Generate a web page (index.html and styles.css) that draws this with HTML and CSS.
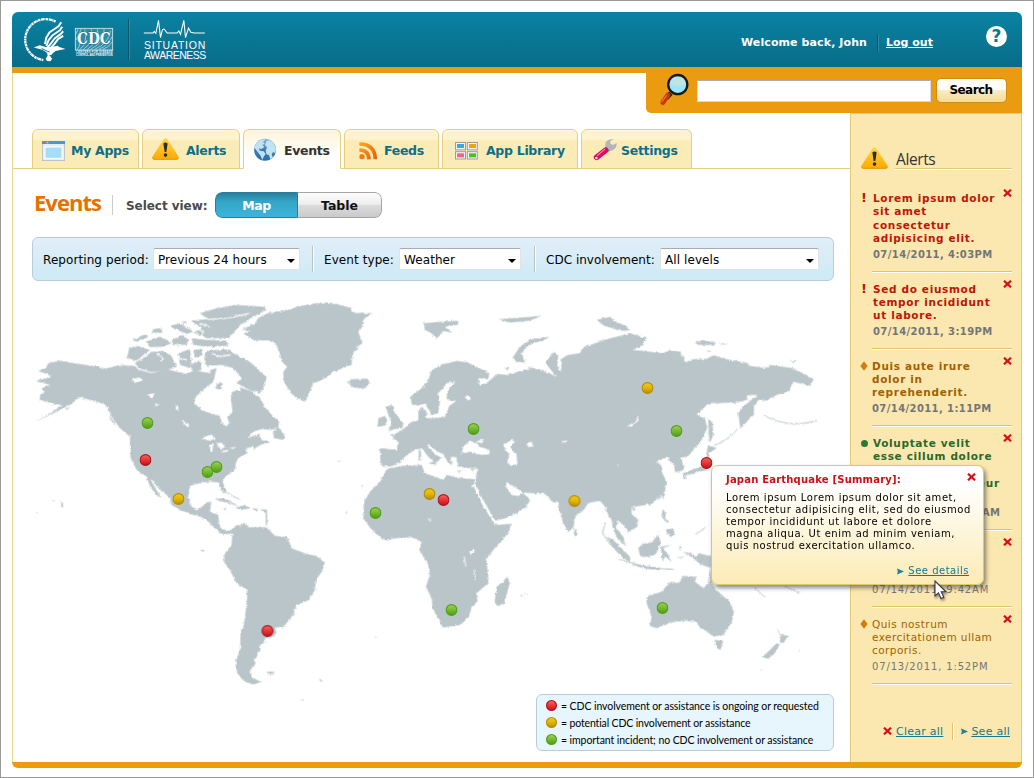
FILE: index.html
```html
<!DOCTYPE html>
<html lang="en">
<head>
<meta charset="utf-8">
<title>Situation Awareness - Events</title>
<link rel="stylesheet" href="styles.css">
</head>
<body>
<svg class="defs" width="0" height="0">
  <defs>
    <linearGradient id="gRed" x1="0" y1="0" x2="0" y2="1"><stop offset="0" stop-color="#f06a62"/><stop offset=".45" stop-color="#e8393c"/><stop offset="1" stop-color="#c80f14"/></linearGradient>
    <linearGradient id="gYellow" x1="0" y1="0" x2="0" y2="1"><stop offset="0" stop-color="#f0cf10"/><stop offset=".5" stop-color="#dfb70a"/><stop offset="1" stop-color="#b88a04"/></linearGradient>
    <linearGradient id="gGreen" x1="0" y1="0" x2="0" y2="1"><stop offset="0" stop-color="#a2d05a"/><stop offset=".5" stop-color="#76b832"/><stop offset="1" stop-color="#4c9c10"/></linearGradient>
    <linearGradient id="gWarn" x1="0" y1="0" x2="0" y2="1"><stop offset="0" stop-color="#ffd84a"/><stop offset="1" stop-color="#ffa800"/></linearGradient>
    <linearGradient id="gFeed" x1="0" y1="0" x2="1" y2="1"><stop offset="0" stop-color="#ffa41c"/><stop offset="1" stop-color="#e2620c"/></linearGradient>
    <linearGradient id="gGlobe" x1="0" y1="0" x2="0" y2="1"><stop offset="0" stop-color="#8fb4d2"/><stop offset=".5" stop-color="#3e7cb0"/><stop offset="1" stop-color="#2a6fae"/></linearGradient>
    <symbol id="dotRed" viewBox="0 0 12 12"><circle cx="6" cy="6" r="5.4" fill="url(#gRed)" stroke="#a81820" stroke-width="1.2"/></symbol>
    <symbol id="dotYellow" viewBox="0 0 12 12"><circle cx="6" cy="6" r="5.4" fill="url(#gYellow)" stroke="#b98a08" stroke-width="1.2"/></symbol>
    <symbol id="dotGreen" viewBox="0 0 12 12"><circle cx="6" cy="6" r="5.4" fill="url(#gGreen)" stroke="#4fa01a" stroke-width="1.2"/></symbol>
    <symbol id="warn" viewBox="0 0 81 70">
      <path d="M34 8Q40 -2 47 8L79 58Q84 69 73 69H8Q-3 69 2 58Z" fill="url(#gWarn)"/>
      <path d="M2 58Q-3 69 8 69H73Q84 69 79 58Q82 66 73 66H8Q0 66 2 58Z" fill="#e79a00"/>
      <path d="M34 20Q40 14 47 20L43 46H38Z" fill="#2b2b2b"/><circle cx="40.500" cy="55" r="5.500" fill="#2b2b2b"/>
    </symbol>
    <symbol id="cross" viewBox="0 0 9 8"><path d="M1 .7L8 7.300M8 .7L1 7.300" stroke="#d80f18" stroke-width="2.200" fill="none"/></symbol>
    <symbol id="arrow" viewBox="0 0 7 7"><path d="M0 .5L7 3.500L0 6.500L.8 3.500Z" fill="#1b7f9e"/></symbol>
  </defs>
</svg>

<div class="page">
  <header class="header">
    <svg class="hhs" viewBox="66 50 138 136">
      <path d="M170 64A62 62 0 1 0 133 180" fill="none" stroke="#fff" stroke-width="7" stroke-dasharray="7 1.500 3 1 9 2"/>
      <g fill="none" stroke="#fff" stroke-width="6" stroke-linejoin="round">
        <path d="M187 66L179 78L152 96L142 112L138 132"/>
        <path d="M190 80L183 90L160 106L149 120L142 138"/>
        <path d="M193 93L186 101L167 115L156 130L146 142"/>
        <path d="M193 107L178 116L166 132L154 146L138 150"/>
      </g>
      <path d="M104 142L122 135L140 141L160 140L176 137L181 141L200 147L184 150L170 153L160 161L154 170L160 176L154 184L144 183L140 176L146 166L144 158L130 149Z" fill="#fff"/>
      <path d="M128 145L142 152L152 156M152 166L168 168" stroke="#0a7795" stroke-width="3" fill="none"/>
    </svg>
    <svg class="cdc" viewBox="222 81 120 90">
      <rect x="226" y="85" width="112" height="65" fill="#2f8ba6" stroke="#d6eaf0" stroke-width="2.500"/>
      <g stroke="#cfe6ed" stroke-width="2" fill="none">
        <path d="M232 148Q244 136 236 108M240 148Q264 130 254 88M250 148Q286 124 274 88M262 148Q302 122 292 88M272 148Q318 124 312 88M284 148Q326 130 332 92M296 148Q326 136 336 110M308 148Q328 142 336 126M228 120L244 87M228 102L234 88"/>
      </g>
      <text x="231" y="132" class="cdc-name" textLength="101" lengthAdjust="spacingAndGlyphs">CDC</text>
      <text x="228" y="160" class="cdc-sub" textLength="110">CENTERS FOR DISEASE</text>
      <text x="228" y="168" class="cdc-sub" textLength="110" lengthAdjust="spacingAndGlyphs">CONTROL AND PREVENTION</text>
    </svg>
    <div class="brand">
      <svg viewBox="430 58 188 60"><path d="M432 100H460L463 95L468 101L476 62L482 114L488 89L493 88L502 100H532L537 94L542 104L552 62L557 114L566 85L573 98L583 100H615" fill="none" stroke="#fff" stroke-width="3.200"/></svg>
      <span class="b1">SITUATION</span>
      <span class="b2">AWARENESS</span>
    </div>
    <div class="user"><span class="welcome">Welcome back, John</span><a class="logout" href="#">Log out</a><span class="help">?</span></div>
  </header>

  <form class="search">
    <svg class="lens" viewBox="0 0 88 98">
      <path d="M33 60L18 76" stroke="#222" stroke-width="15"/>
      <path d="M24 66L9 88" stroke="#c43a06" stroke-width="15" stroke-linecap="round"/>
      <path d="M19 68L6 86" stroke="#f2722e" stroke-width="4" stroke-linecap="round"/>
      <circle cx="54" cy="34" r="29" fill="#9ce6fb" stroke="#14181b" stroke-width="7"/>
      <path d="M30 30A25 25 0 0 1 78 30Q54 48 30 30Z" fill="#c3e2e4"/>
    </svg>
    <span class="field"></span>
    <button class="go" type="button">Search</button>
  </form>

  <div class="columns">
    <main class="main">
      <nav class="tabs">
        <a class="tab t1"><svg width="23" height="20" viewBox="0 0 69 60"><rect x="1" y="1" width="67" height="58" fill="#e9edf0" stroke="#b4bcc4" stroke-width="3"/><rect width="69" height="9" fill="#3d9be0"/><rect x="3" y="3" width="5" height="4" fill="#e55"/><rect x="14" y="3" width="5" height="4" fill="#fc4"/><rect x="9" y="18" width="51" height="34" fill="#a5dcf7" stroke="#fff" stroke-width="3"/></svg><span>My Apps</span></a>
        <a class="tab t2"><svg width="27" height="23"><use href="#warn"/></svg><span>Alerts</span></a>
        <a class="tab t3 on"><svg width="24" height="23" viewBox="0 0 72 69"><circle cx="36" cy="35" r="33" fill="url(#gGlobe)"/><path d="M3 30Q8 12 24 5L38 4L30 12L36 18L28 20L34 27L24 34L18 30L20 38L32 40L38 48L32 56L28 66L22 52L14 42L8 34ZM40 10L46 6L56 10Q66 18 69 32L67 46L60 42L56 50L60 58L52 64L48 52L40 48L38 38L42 28L36 22Z" fill="#bfe3f3"/></svg><span>Events</span></a>
        <a class="tab t4"><svg width="19" height="18" viewBox="0 0 57 54"><circle cx="9" cy="44" r="8" fill="#f47a10"/><path d="M1 24Q29 24 30 52M1 6Q48 6 49 52" fill="none" stroke="url(#gFeed)" stroke-width="11"/></svg><span>Feeds</span></a>
        <a class="tab t5"><svg width="23" height="18" viewBox="0 0 69 54"><g stroke="#999da3" stroke-width="3" fill="#f4f4f4"><rect x="1.500" y="1.500" width="30" height="22"/><rect x="37" y="1.500" width="30" height="22"/><rect x="1.500" y="29" width="30" height="22"/><rect x="37" y="29" width="30" height="22"/></g><rect x="6" y="6" width="21" height="12" fill="#35a9e8"/><rect x="42" y="6" width="21" height="12" fill="#eda021"/><rect x="6" y="34" width="21" height="12" fill="#ef6387"/><rect x="42" y="34" width="21" height="12" fill="#46c40e"/></svg><span>App Library</span></a>
        <a class="tab t6"><svg width="24" height="22" viewBox="0 0 72 66"><path d="M36 28L45 38L60 33Q72 26 71 12L60 18L52 14L52 6L62 1Q46 -2 38 10Z" fill="#b2b6ba"/><path d="M38 26L48 36" stroke="#8e9396" stroke-width="5"/><path d="M38 34L11 55" stroke="#dc0c60" stroke-width="17" stroke-linecap="round"/><path d="M36 30L12 50" stroke="#f77aa8" stroke-width="4"/><circle cx="10" cy="57" r="4" fill="#fbdbe6"/></svg><span>Settings</span></a>
      </nav>

      <div class="bar">
        <h1>Events</h1>
        <span class="view-label">Select view:</span>
        <div class="switch"><span class="map-on">Map</span><span class="table-off">Table</span></div>
      </div>

      <div class="filters">
        <label class="f1">Reporting period:</label><span class="select s1">Previous 24 hours</span>
        <label class="f2">Event type:</label><span class="select s2">Weather</span>
        <label class="f3">CDC involvement:</label><span class="select s3">All levels</span>
      </div>

      <section class="map">
        <svg class="world" viewBox="13 281 837 481">
          <defs><filter id="coast" x="0" y="0" width="1" height="1"><feTurbulence type="fractalNoise" baseFrequency=".3" numOctaves="3" seed="4"/><feDisplacementMap in="SourceGraphic" scale="3" xChannelSelector="R" yChannelSelector="G"/></filter></defs>
          <g filter="url(#coast)" fill="#bac5c9" transform="translate(-.6 -.6)">
            <!-- North America -->
            <g transform="translate(20.500 290.500) scale(.33333)">
              <path d="M45 273L80 265L95 258L55 243L78 235L85 220L120 212L160 220L235 230L250 238L300 225L345 228L350 238L395 250L440 238L470 245L500 252L525 240L545 245L572 250L585 262L578 278L560 290L527 320L523 340L545 360L575 372L600 378L605 395L618 410L628 400L622 382L638 365L635 345L632 325L636 306L655 300L685 312L718 320L735 350L755 375L778 395L775 412L755 420L725 418L700 425L682 445L700 438L718 432L722 446L740 452L750 458L720 465L702 478L700 470L680 475L682 490L655 505L648 520L645 540L615 562L608 575L618 600L612 612L602 598L597 578L575 575L545 578L510 588L505 620L515 650L530 658L550 650L555 638L575 635L570 665L595 675L598 700L605 718L630 722L645 712L648 722L630 732L605 732L585 715L560 690L540 680L510 672L480 660L455 645L450 625L430 605L410 590L400 570L394 568L398 580L410 600L425 625L410 615L390 590L380 560L350 540L332 505L330 440L300 415L275 380L262 348L240 338L210 330L180 322L150 345L100 370L45 395L100 365L125 345L100 342L60 330L60 315L75 305L65 295L90 285Z"/>
              <path d="M760 425L775 410L785 425L795 440L790 450L762 445Z"/>
              <path d="M328 172L360 170L390 180L350 212L320 205L325 190Z"/>
              <path d="M365 208L395 186L430 183L455 198L470 232L440 240L395 247L355 235L345 220Z"/>
              <path d="M337 150L380 132L385 142L350 155ZM400 118L425 114L428 128L395 130ZM378 155L420 140L440 150L455 160L430 170L390 172ZM450 108L480 100L520 125L500 132L465 118ZM455 150L490 135L505 150L500 165L460 165ZM515 145L560 150L620 152L625 168L560 170L520 165ZM485 97L500 94L498 104Z"/>
              <path d="M475 190L510 178L515 210L510 235L480 225ZM520 180L545 178L548 195L525 205ZM510 225L540 210L545 240L520 245Z"/>
              <path d="M560 182L620 178L650 195L690 215L740 262L735 285L720 310L690 300L650 280L665 265L640 235L605 225L560 228L552 200Z"/>
              <path d="M570 240L590 235L585 258L575 262ZM590 280L605 278L605 300L588 296ZM660 292L700 305L715 330L700 346L690 325L665 308Z"/>
              <path d="M540 70L590 55L650 45L730 50L740 60L700 80L680 95L660 105L640 130L625 145L560 145L520 128L545 115L512 92L560 88Z"/>
              <path d="M585 628L610 625L640 640L660 652L630 640L600 634ZM645 655L675 645L692 655L665 660ZM700 656L715 657L714 662L700 661ZM608 655L622 657L612 661ZM720 656L738 660L742 668L742 705L738 706L737 668Z"/>
              <path d="M120 633L132 648L125 653ZM98 630L104 633L99 635ZM48 667L54 669L50 672ZM268 380L275 385L290 405L280 402ZM135 360L148 350L145 358Z"/>
              <g fill="#fff"><path d="M545 447L560 438L575 434L588 447L565 452ZM570 462L580 460L577 490L571 482ZM590 460L605 458L615 470L602 480ZM600 488L625 478L623 485ZM628 475L648 470L640 477ZM335 270L355 262L370 270L345 280ZM382 315L405 310L396 325ZM485 390L508 405L505 413L490 400ZM405 345L420 340L410 350ZM468 345L476 350L474 365L468 358ZM615 240L636 236L640 262L620 275L608 262Z"/></g>
              <g stroke="#fff" stroke-width="4" fill="none"><path d="M540 75L565 88L620 85L690 70M470 205L500 210M575 190L600 200L630 195M540 100L570 112M410 190L430 205L425 215M530 115L550 125L545 140L500 142"/></g>
            </g>
            <!-- Greenland, Iceland, South America -->
            <g transform="translate(200.500 290.500) scale(.33333)">
              <path d="M125 120L165 100L175 85L200 70L270 60L290 50L350 40L410 42L455 55L455 68L517 70L490 90L485 115L475 125L488 160L465 175L480 170L458 188L455 225L400 245L385 258L365 270L340 280L318 333L290 325L270 305L252 275L250 245L262 230L245 215L240 190L228 165L215 152L160 150L132 132L150 122Z"/>
              <path d="M442 278L455 268L500 266L512 280L490 297L460 292Z"/>
              <path d="M95 720L110 708L135 702L150 712L200 712L225 738L262 742L275 775L320 792L350 798L374 818L370 840L348 870L345 900L328 930L290 945L280 975L250 1012L225 1012L230 1030L215 1042L195 1045L195 1060L180 1062L182 1078L172 1090L172 1105L160 1108L168 1120L152 1140L155 1160L175 1172L187 1175L160 1184L130 1172L112 1150L107 1115L120 1080L122 1030L133 1000L140 940L143 900L110 880L90 840L72 815L75 790L95 765L97 735Z"/>
              <path d="M200 1145L224 1146L218 1154L205 1153ZM355 1166L368 1172L364 1176ZM300 1230L315 1230L312 1234ZM413 512L424 514L418 517ZM483 588L490 586L488 592ZM436 668L442 666L440 672ZM4 778L14 782L8 787Z"/>
            </g>
            <!-- Europe, Asia, Africa, Oceania -->
            <g transform="translate(350.500 300.500) scale(.33333)">
              <path d="M90 450L95 445L140 450L145 425L120 405L140 400L165 385L185 365L205 362L205 332L218 322L232 340L228 355L262 354L285 350L298 318L320 302L270 305L265 340L245 345L225 310L205 318L185 310L182 290L215 265L235 240L245 212L270 195L320 183L350 187L380 200L418 220L415 238L385 235L390 255L410 250L440 222L475 225L520 210L545 203L600 220L620 232L587 190L610 155L625 165L622 200L634 215L635 175L655 165L690 160L700 142L730 132L770 118L800 110L840 100L890 115L880 135L850 150L940 160L960 150L990 155L1008 187L1030 178L1070 177L1090 166L1140 180L1190 188L1200 198L1250 205L1260 195L1330 205L1392 238L1380 258L1330 245L1315 275L1280 285L1250 302L1225 300L1212 320L1212 345L1190 365L1171 385L1165 340L1180 320L1222 285L1195 285L1190 300L1160 308L1080 310L1060 325L1040 345L1065 355L1072 385L1055 420L1035 445L1015 468L990 475L1004 498L998 512L975 517L972 495L960 485L955 470L920 485L938 500L935 515L950 545L945 575L905 612L870 618L845 622L845 640L865 660L862 680L835 697L825 680L805 660L798 680L820 710L827 738L805 720L790 690L785 660L775 645L765 620L750 602L715 610L700 632L675 650L672 680L655 697L640 670L628 630L625 605L612 610L585 582L520 578L470 546L468 560L485 585L505 588L520 580L542 600L525 625L480 650L435 667L420 635L385 575L375 560L380 538L383 505L350 503L325 500L320 472L300 470L310 495L295 490L280 462L262 455L235 432L232 440L260 465L275 475L262 485L255 490L235 470L215 445L195 450L175 462L155 480L150 490L120 500L92 495Z"/>
              <path d="M110 507L150 498L215 495L225 520L255 530L280 540L290 525L330 535L375 538L372 560L395 610L435 675L485 672L475 700L430 750L408 780L415 820L415 850L380 880L383 905L365 920L358 950L330 975L278 983L265 955L248 925L245 895L228 860L240 825L235 795L208 750L215 725L180 710L100 720L65 690L40 655L42 605L60 575L90 545Z"/>
              <path d="M472 828L480 850L462 912L445 918L434 905L440 860L462 845Z"/>
              <path d="M108 320L130 315L135 340L160 370L158 385L115 390L125 370L115 345ZM85 355L105 348L112 360L105 378L83 380ZM207 448L213 455L213 482L206 480ZM235 488L258 485L255 497ZM318 512L334 512L330 517ZM358 508L374 504L368 512Z"/>
              <path d="M220 70L270 66L325 62L325 74L285 80L308 100L280 92L262 115L225 88ZM445 58L500 54L575 48L540 62L480 68ZM487 175L510 140L545 118L600 110L580 122L540 132L515 160L525 188L500 186ZM464 205L478 204L474 212Z"/>
              <path d="M672 685L684 695L680 710L672 705ZM740 60L780 50L800 68L830 78L838 92L810 92L765 78ZM1035 128L1060 120L1095 128L1090 136L1045 135ZM1105 130L1135 132L1120 136ZM1065 152L1085 152L1080 156ZM1318 184L1340 180L1335 186Z"/>
              <path d="M1075 355L1088 370L1090 405L1080 430L1076 400ZM1070 455L1075 435L1100 445L1085 455L1078 460L1078 475L1070 478ZM1072 478L1078 495L1070 510L1040 516L1000 530L1000 520L1030 508L1055 500ZM1000 522L1010 535L1002 538Z"/>
              <path d="M935 580L945 582L940 600ZM938 628L948 640L945 655L960 665L950 668L935 650ZM950 690L970 685L975 705L960 712ZM865 745L880 730L905 728L925 705L932 725L920 760L900 772L870 768ZM770 710L790 720L840 770L843 788L820 775L790 745ZM840 792L900 798L935 805L930 812L880 805ZM932 740L965 735L940 745L955 765L965 785L945 770L938 785ZM990 735L995 745L988 750ZM945 805L975 808L960 812ZM930 690L920 702L926 694ZM985 770L1005 772L990 775ZM846 622L858 628L850 634Z"/>
              <path d="M1000 755L1020 760L1035 770L1050 760L1090 772L1150 800L1155 850L1120 810L1070 800L1050 792L1030 775Z"/>
              <path d="M890 890L935 875L960 845L985 850L1000 828L1040 830L1035 845L1060 865L1075 850L1080 800L1090 860L1110 880L1140 905L1152 935L1145 970L1120 1005L1090 1010L1065 990L1050 985L1040 965L1000 963L960 968L920 985L900 978L905 950L890 910ZM1094 1020L1120 1022L1112 1050L1100 1045Z"/>
              <path d="M1278 982L1295 1005L1315 1008L1300 1030L1290 1025L1292 1008ZM1280 1030L1290 1035L1275 1060L1255 1076L1237 1072L1260 1050Z"/>
              <path d="M512 885L518 888L513 890ZM524 880L530 882L526 885ZM1347 1050L1351 1054L1347 1056ZM1234 1108L1238 1112L1233 1112ZM75 1009L82 1011L78 1014Z"/>
              <g fill="#fff"><path d="M340 440L360 422L380 432L390 440L418 450L420 462L395 465L360 455L335 462ZM378 425L400 418L395 430ZM460 435L485 420L495 425L480 440L500 465L502 492L482 498L472 485L478 468ZM532 430L545 425L550 438L535 442ZM358 755L370 748L373 758L362 765ZM268 298L264 280L280 265L290 250L315 245L310 255L292 275L290 295L300 305L272 312ZM345 288L360 290L362 300L350 300ZM830 378L855 368L866 345L864 362L845 380ZM236 655L246 662L240 665ZM632 425L650 422L648 428ZM802 494L808 496L804 499Z"/></g>
              <path d="M343 770L348 800M373 810L376 840" stroke="#fff" stroke-width="3" fill="none"/>
              <path d="M365 560L375 555L400 610L435 665L480 655" stroke="#fff" stroke-width="5" fill="none"/>
            </g>
            <g fill="none" stroke="#bac5c9" stroke-width="1"><path d="M715 446Q730 440 738 430M764 416Q790 430 818 421M664 494L658 500M606 523L603 534L613 547M620 560L648 568L668 570M696 535L706 528M224 491L240 500M755 588L766 598M785 587L800 593"/></g>
          </g>
          <g>
            <use href="#dotGreen" x="141.500" y="417" width="12" height="12"/><use href="#dotRed" x="139.500" y="454" width="12" height="12"/>
            <use href="#dotGreen" x="201.500" y="466" width="12" height="12"/><use href="#dotGreen" x="210.500" y="461" width="12" height="12"/>
            <use href="#dotYellow" x="172.500" y="493" width="12" height="12"/><use href="#dotRed" x="261.500" y="625" width="12" height="12"/>
            <use href="#dotGreen" x="369.500" y="507" width="12" height="12"/><use href="#dotYellow" x="423.500" y="488" width="12" height="12"/>
            <use href="#dotRed" x="437.500" y="494" width="12" height="12"/><use href="#dotGreen" x="445.500" y="604" width="12" height="12"/>
            <use href="#dotGreen" x="467.500" y="423" width="12" height="12"/><use href="#dotYellow" x="568.500" y="495" width="12" height="12"/>
            <use href="#dotYellow" x="641.500" y="382" width="12" height="12"/><use href="#dotGreen" x="670.500" y="425" width="12" height="12"/>
            <use href="#dotRed" x="700.500" y="457" width="12" height="12"/><use href="#dotGreen" x="656.500" y="602" width="12" height="12"/>
          </g>
        </svg>
        <ul class="legend">
          <li><svg><use href="#dotRed"/></svg><span class="l1">= CDC involvement or assistance is ongoing or requested</span></li>
          <li><svg><use href="#dotYellow"/></svg><span class="l2">= potential CDC involvement or assistance</span></li>
          <li><svg><use href="#dotGreen"/></svg><span class="l3">= important incident; no CDC involvement or assistance</span></li>
        </ul>
        <div class="popup">
          <svg class="x"><use href="#cross"/></svg>
          <h3>Japan Earthquake [Summary]:</h3>
          <p>Lorem ipsum Lorem ipsum dolor sit amet,<br>consectetur adipisicing elit, sed do eiusmod<br>tempor incididunt ut labore et dolore<br>magna aliqua. Ut enim ad minim veniam,<br>quis nostrud exercitation ullamco.</p>
          <div class="more"><svg><use href="#arrow"/></svg><a href="#">See details</a></div>
          <svg class="cursor" viewBox="0 0 14 20"><path d="M1 1V16L4.500 12.800L7 18.500L9.800 17.300L7.300 11.800H12Z" fill="#fff" stroke="#333a50" stroke-width="1.100"/></svg>
        </div>
      </section>
    </main>

    <aside class="side">
      <div class="side-head"><svg><use href="#warn"/></svg><h2>Alerts</h2></div>
      <article class="alert red first"><i class="bang">!</i><p>Lorem ipsum dolor<br>sit amet<br>consectetur<br>adipisicing elit.</p><time>07/14/2011, 4:03PM</time><svg class="x"><use href="#cross"/></svg></article>
      <article class="alert red"><i class="bang">!</i><p>Sed do eiusmod<br>tempor incididunt<br>ut labore.</p><time>07/14/2011, 3:19PM</time><svg class="x"><use href="#cross"/></svg></article>
      <article class="alert amber"><i class="gem"></i><p>Duis aute irure<br>dolor in<br>reprehenderit.</p><time>07/14/2011, 1:11PM</time><svg class="x"><use href="#cross"/></svg></article>
      <article class="alert green"><i class="disc"></i><p>Voluptate velit<br>esse cillum dolore<br>eu fugiat nulla<br><span class="wide">pariatur excepteur</span></p><time>07/14/2011, 10:55AM</time><svg class="x"><use href="#cross"/></svg></article>
      <article class="alert plain covered"><time>07/14/2011, 9:42AM</time><svg class="x"><use href="#cross"/></svg></article>
      <article class="alert amber plain"><i class="gem"></i><p>Quis nostrum<br>exercitationem ullam<br>corporis.</p><time>07/13/2011, 1:52PM</time><svg class="x"><use href="#cross"/></svg></article>
      <div class="side-foot"><svg class="cl"><use href="#cross"/></svg><a href="#">Clear all</a><i></i><svg class="ar"><use href="#arrow"/></svg><a href="#">See all</a></div>
    </aside>
  </div>
</div>
</body>
</html>
```
FILE: styles.css
```css
* { box-sizing: border-box; }
html { background: #fff; }
body { margin: 0; width: 1034px; height: 778px; padding: 11px; border: 1px solid #999; overflow: hidden; font-family: "DejaVu Sans", Verdana, sans-serif; color: #000; }
.defs { position: absolute; }
svg { display: block; flex: none; }
h1, h2, h3, p, ul { margin: 0; padding: 0; }
.page { width: 1010px; height: 756px; border-radius: 6px; overflow: hidden; border-bottom: 6px solid #eb9b10; }

.header { display: flex; height: 61px; background: linear-gradient(#0b82a2, #076c89); border-bottom: 6px solid #eb9b10; color: #fff; }
.hhs { width: 46px; height: 45px; margin: 5px 0 0 9px; }
.cdc { width: 40px; height: 30px; margin: 15px 0 0 7px; overflow: visible; }
.cdc-name { font: bold 50px "DejaVu Serif", serif; fill: #fff; stroke: #0a7795; stroke-width: 3px; paint-order: stroke; }
.cdc-sub { font: bold 8px "Liberation Sans", sans-serif; fill: #fff; }
.brand { margin: 7px 0 0 14px; height: 41px; padding-left: 14px; border-left: 1px solid #07566e; box-shadow: inset 1px 0 #2f8ba4; font-family: "Liberation Sans", Arial, sans-serif; font-size: 11px; line-height: 10px; white-space: nowrap; }
.brand svg { width: 63px; height: 20px; }
.brand span { display: block; }
.b1 { letter-spacing: .75px; margin: 1px 0 0 1px; font-size: 10.500px; }
.b2 { letter-spacing: -.5px; margin-left: 1px; font-size: 10.500px; }
.user { margin-left: auto; display: flex; font-weight: bold; font-size: 11px; letter-spacing: .1px; white-space: nowrap; padding: 22px 15px 0 0; line-height: 17px; }
.welcome { width: 137px; border-right: 1px solid #07566e; height: 18px; }
.logout { color: #fff; width: 108px; padding-left: 8px; box-shadow: inset 1px 0 #2f8ba4; height: 18px; letter-spacing: 0; }
.help { width: 21px; height: 21px; border-radius: 50%; background: #fff; color: #0a7795; font: bold 17px/21px "DejaVu Sans"; text-align: center; margin-top: -8px; }

.search { display: flex; position: relative; height: 40px; width: 376px; margin-left: auto; background: #eb9b10; border-radius: 0 0 0 5px; padding-left: 14px; }
.lens { width: 29px; height: 33px; }
.field { width: 234px; height: 22px; background: #fff; border: 1px solid #d6d9e0; border-top-color: #aaacb5; margin: 7px 5px 0 8px; }
.go { width: 71px; height: 25px; margin-top: 5px; border: 1px solid #d08c10; border-radius: 5px; background: linear-gradient(#fffdf6 0 45%, #f9ecc6 50%, #f5db90); font: bold 12px "DejaVu Sans"; letter-spacing: -.55px; padding: 0 1px 2px 0; }

.columns { display: grid; grid-template-columns: 838px 172px; height: 649px; }
.main { position: relative; border-left: 1px solid #ebd58c; margin-top: -40px; padding-top: 40px; }
.tabs { display: flex; gap: 3px; height: 56px; padding: 16px 0 0 19px; border-bottom: 1px solid #e6d084; }
.tab { height: 40px; display: flex; align-items: center; border: 1px solid #e8cf80; border-radius: 6px 6px 0 0; background: linear-gradient(#fdf3d0 0 9px, #fbebb6 11px); box-shadow: inset 0 1px #fef7df; font-weight: bold; font-size: 12.500px; letter-spacing: -.3px; color: #0b6f8b; padding: 3px 0 0 9px; white-space: nowrap; }
.tab span { padding-left: 6px; }
.tab.on { background: linear-gradient(#fdf5da, #fff 80%); border-bottom-color: #fff; color: #333; }
.t1 { width: 107px; } .t2 { width: 98px; } .t3 { width: 98px; } .t4 { width: 95px; padding-left: 14px; } .t5 { width: 136px; padding-left: 12px; } .t6 { width: 111px; padding-left: 11px; }
.t2 svg { margin-top: -4px; }
.t3 svg { margin-top: -2px; }
.t2 span, .t3 span { padding-left: 7px; }
.t5 span { padding-left: 8px; }
.t6 svg { margin-top: -2px; }
.t6 span { padding-left: 4px; }

.bar { display: flex; align-items: center; height: 68px; padding: 3px 0 0 21px; white-space: nowrap; }
h1 { font: bold 22px "Open Sans", sans-serif; letter-spacing: -.95px; color: #e57200; width: 79px; border-right: 1px solid #ccc; line-height: 15px; height: 20px; }
.view-label { width: 102px; padding-left: 13px; font-weight: bold; font-size: 12px; letter-spacing: -.05px; color: #4a4a4a; padding-top: 2px; }
.switch { display: flex; width: 167px; height: 26px; border-radius: 7px; font-weight: bold; font-size: 12.5px; line-height: 25px; text-align: center; overflow: hidden; }
.map-on { width: 83px; color: #fff; background: linear-gradient(#2a7f9c, #35a5c5 35%, #3bb5dc); border: 1px solid #277f9b; border-radius: 7px 0 0 7px; letter-spacing: -.5px; }
.table-off { width: 84px; color: #111; background: linear-gradient(#fdfdfd, #ececec 50%, #dcdcdc 50%, #cacaca); border: 1px solid #a5a5a5; border-left: 0; border-radius: 0 7px 7px 0; }

.filters { display: flex; align-items: center; margin-left: 19px; width: 802px; height: 44px; border: 1px solid #b9cdd8; border-radius: 6px; background: linear-gradient(#e2eef9, #cdeaf5); font-size: 12px; letter-spacing: .08px; padding-left: 10px; white-space: nowrap; }
.filters label { height: 26px; line-height: 28px; }
.f1 { width: 110px; }
.f2, .f3 { border-left: 1px solid #bcc3c8; box-shadow: inset 1px 0 #fff; padding-left: 11px; }
.f2 { width: 87px; margin-left: 12px; }
.f3 { width: 126px; margin-left: 13px; letter-spacing: .02px; }
.select { position: relative; height: 22px; line-height: 22px; background: #fff; border: 1px solid #dfe3e6; border-top-color: #a6acb2; padding-left: 4px; border-radius: 2px; }
.select::after { content: ""; position: absolute; right: 4px; top: 10px; border: 4px solid transparent; border-top-color: #000; border-bottom: 0; }
.s1 { width: 147px; } .s2 { width: 122px; } .s3 { width: 159px; }

.map { position: relative; height: 481px; }
.world { width: 837px; height: 481px; }
.legend { position: absolute; left: 523px; top: 413px; width: 298px; height: 57px; list-style: none; border: 1px solid #b9cdd8; border-radius: 6px; background: #e7f6fc; padding: 2px 0 0 9px; font: 10.500px "Lato", sans-serif; letter-spacing: -.08px; }
.legend li { display: flex; align-items: center; height: 17px; white-space: nowrap; gap: 4px; }
.legend svg { width: 11px; height: 11px; margin-top: -1px; }
.legend .l2 { letter-spacing: -.14px; }

.popup { position: absolute; z-index: 2; left: 698px; top: 184px; width: 273px; height: 120px; border: 1px solid #e0c66c; border-radius: 7px; background: linear-gradient(#fff 15%, #fbebb4); box-shadow: 2px 3px 4px rgba(60,60,60,.6); padding: 8px 0 0 14px; white-space: nowrap; }
.popup h3 { font-size: 10px; line-height: 12px; letter-spacing: .2px; color: #cc1016; }
.popup p { font-size: 10px; line-height: 12px; letter-spacing: .56px; padding-top: 6px; }
.popup .x { position: absolute; right: 7px; top: 7px; }
.x { width: 9px; height: 8px; }
.more { display: flex; align-items: center; gap: 4px; justify-content: flex-end; padding: 13px 14px 0 0; font-size: 10px; letter-spacing: .5px; line-height: 12px; }
.more svg { width: 7px; height: 7px; }
a { color: #14788f; }
.cursor { position: absolute; left: 222px; top: 114px; width: 14px; height: 20px; filter: drop-shadow(1px 2px 1px rgba(0,0,0,.4)); }

.side { background: #fbe8b0; border: 1px solid #e3ca78; border-bottom: 0; padding: 33px 9px 0 10px; white-space: nowrap; }
.side-head { display: flex; height: 23px; gap: 7px; margin-bottom: 22px; }
.side-head svg { width: 27px; height: 23px; margin-top: -1px; }
h2 { flex: 1; font: 15.500px/20px "Open Sans", sans-serif; letter-spacing: -.4px; color: #333; border-bottom: 1px solid #e3ca78; box-shadow: 0 1px #fff; padding: 2px 0 0 1px; height: 22px; }
.alert { position: relative; margin-left: 11px; padding-bottom: 10px; border-bottom: 1px solid #dfc566; box-shadow: 0 1px #fff; margin-bottom: 11px; font-size: 10.500px; line-height: 13px; letter-spacing: .66px; font-weight: bold; }
.alert p { padding-left: 1px; }
.alert time { display: block; padding: 3px 0 0 1px; color: #757575; font-size: 10px; line-height: 13px; letter-spacing: .4px; }
.alert .x { position: absolute; right: 0; top: -3px; }
.alert i { position: absolute; left: -11px; top: 3px; }
.first p { line-height: 13.250px; }
.bang { font: bold 13px/13px "DejaVu Sans"; top: -1px !important; }
.gem { width: 6px; height: 6px; background: #d27c0a; transform: rotate(45deg) skew(8deg, 8deg); top: 3px !important; }
.disc { width: 7px; height: 7px; border-radius: 50%; background: #2f7a33; }
.red { color: #bd1506; } .amber { color: #a35f00; } .green { color: #2b682b; }
.green p { min-height: 66px; line-height: 13.250px; }
.wide { letter-spacing: .88px; }
.plain { font-weight: normal; letter-spacing: .45px; }
.plain time { letter-spacing: .85px; }
.amber p, .amber time, .covered time { padding-left: 0; }
.covered { padding-top: 39px; }
.side-foot { display: flex; align-items: center; font-size: 11px; letter-spacing: .25px; padding: 27px 0 0 22px; height: 45px; margin-right: -8px; }
.side-foot svg.cl { width: 9px; height: 8px; margin-right: 4px; }
.side-foot i { width: 1px; height: 17px; background: #dfc566; box-shadow: 1px 0 #fff; margin: 0 8px 0 9px; }
.side-foot svg.ar { width: 7px; height: 7px; margin-right: 3px; }
```
